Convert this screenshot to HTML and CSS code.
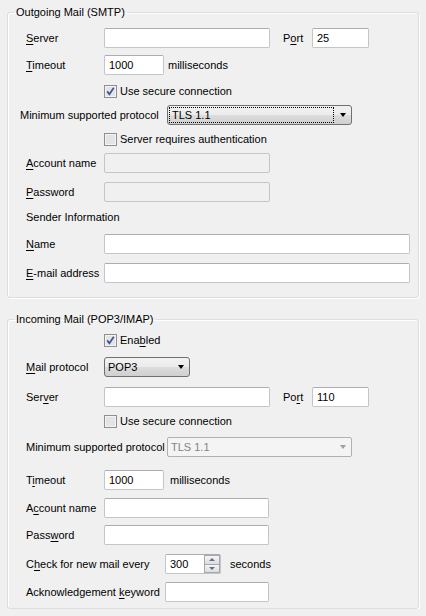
FILE: index.html
```html
<!DOCTYPE html>
<html lang="en">
<head>
    <meta charset="UTF-8">
    <title>Mail Settings</title>
    <link rel="stylesheet" href="styles.css">
</head>
<body>
    <!-- Outgoing mail -->
    <fieldset class="group smtp">
        <legend>Outgoing Mail (SMTP)</legend>

        <div class="row">
            <label class="lbl"><u>S</u>erver</label>
            <input class="text w-server" type="text">
            <label class="port-lbl">P<u>o</u>rt</label>
            <input class="text w-port" type="text" value="25">
        </div>
        <div class="row mt7">
            <label class="lbl"><u>T</u>imeout</label>
            <input class="text w-timeout" type="text" value="1000">
            <span class="unit">milliseconds</span>
        </div>
        <div class="row mt6 check-row">
            <span class="check">
                <svg width="13" height="13" viewBox="0 0 13 13"><rect x="0.5" y="0.5" width="12" height="12" fill="#f4f4f4" stroke="#8f8f8f"/><rect x="2" y="2" width="9" height="9" fill="#e2e4e7"/><path d="M3.2 6.4 L5.4 9.2 L9.8 2.8" fill="none" stroke="#3d5592" stroke-width="1.7"/></svg>
            </span>
            <span>Use secure connection</span>
        </div>
        <div class="row mt4">
            <label class="lbl lbl-proto-out">Minimum supported protocol</label>
            <div class="combo w-proto">
                <span class="combo-text focus">TLS 1.1</span>
                <span class="arrow"></span>
            </div>
        </div>
        <div class="row mt4 check-row">
            <span class="check">
                <svg width="13" height="13" viewBox="0 0 13 13"><rect x="0.5" y="0.5" width="12" height="12" fill="#f4f4f4" stroke="#8f8f8f"/><rect x="2" y="2" width="9" height="9" fill="#e2e4e7"/></svg>
            </span>
            <span>Server requires authentication</span>
        </div>
        <div class="row mt4">
            <label class="lbl"><u>A</u>ccount name</label>
            <input class="text w-server" type="text" disabled>
        </div>
        <div class="row mt9">
            <label class="lbl"><u>P</u>assword</label>
            <input class="text w-server" type="password" disabled>
        </div>
        <div class="row mt5">
            <span>Sender Information</span>
        </div>
        <div class="row mt7">
            <label class="lbl"><u>N</u>ame</label>
            <input class="text w-wide" type="text">
        </div>
        <div class="row mt9">
            <label class="lbl"><u>E</u>-mail address</label>
            <input class="text w-wide" type="text">
        </div>
    </fieldset>

    <!-- Incoming mail -->
    <fieldset class="group pop">
        <legend>Incoming Mail (POP3/IMAP)</legend>

        <div class="row check-row">
            <span class="check">
                <svg width="13" height="13" viewBox="0 0 13 13"><rect x="0.5" y="0.5" width="12" height="12" fill="#f4f4f4" stroke="#8f8f8f"/><rect x="2" y="2" width="9" height="9" fill="#e2e4e7"/><path d="M3.2 6.4 L5.4 9.2 L9.8 2.8" fill="none" stroke="#3d5592" stroke-width="1.7"/></svg>
            </span>
            <span>Ena<u>b</u>led</span>
        </div>
        <div class="row mt7">
            <label class="lbl"><u>M</u>ail protocol</label>
            <div class="combo w-mail">
                <span class="combo-text">POP3</span>
                <span class="arrow"></span>
            </div>
        </div>
        <div class="row mt10">
            <label class="lbl">Ser<u>v</u>er</label>
            <input class="text w-server" type="text">
            <label class="port-lbl">Po<u>r</u>t</label>
            <input class="text w-port" type="text" value="110">
        </div>
        <div class="row mt4 check-row">
            <span class="check">
                <svg width="13" height="13" viewBox="0 0 13 13"><rect x="0.5" y="0.5" width="12" height="12" fill="#f4f4f4" stroke="#8f8f8f"/><rect x="2" y="2" width="9" height="9" fill="#e2e4e7"/></svg>
            </span>
            <span>Use secure connection</span>
        </div>
        <div class="row mt6">
            <label class="lbl lbl-proto-in">Minimum supported protocol</label>
            <div class="combo combo-disabled w-proto">
                <span class="combo-text">TLS 1.1</span>
                <span class="arrow"></span>
            </div>
        </div>
        <div class="row mt13">
            <label class="lbl">T<u>i</u>meout</label>
            <input class="text w-timeout" type="text" value="1000">
            <span class="unit unit-in">milliseconds</span>
        </div>
        <div class="row mt8">
            <label class="lbl">A<u>c</u>count name</label>
            <input class="text w-server-in" type="text">
        </div>
        <div class="row mt7">
            <label class="lbl">Pass<u>w</u>ord</label>
            <input class="text w-server-in" type="password">
        </div>
        <div class="row mt9">
            <label class="lbl lbl-long">C<u>h</u>eck for new mail every</label>
            <div class="spin">
                <span class="spin-val">300</span>
                <div class="spin-btns">
                    <span class="spin-btn"><span class="tri-up"></span></span>
                    <span class="spin-btn"><span class="tri-down"></span></span>
                </div>
            </div>
            <span class="unit unit-sec">seconds</span>
        </div>
        <div class="row mt8">
            <label class="lbl lbl-long">Acknowledgement <u>k</u>eyword</label>
            <input class="text w-ack" type="text">
        </div>
    </fieldset>
</body>
</html>
```

FILE: styles.css
```css
body {
    margin: 0;
    background-color: #f0f0f0;
    font-family: "Liberation Sans", Arial, sans-serif;
    font-size: 11px;
    color: #000;
}
.group {
    box-sizing: border-box;
    width: 412px;
    margin: 5px 0 0 7px;
    border: 1px solid #d5dfe5;
    border-radius: 3px;
    box-shadow: 1px 1px 0 #fff, inset 1px 1px 0 #fff;
    padding: 9px 0 14px 18px;
    min-width: 0;
}
.pop {
    margin-top: 14px;
    padding-top: 4px;
    padding-bottom: 6px;
}
legend {
    margin-left: -12px;
    padding: 0 2px;
    line-height: 14px;
}
.row {
    display: flex;
    align-items: center;
    height: 20px;
    white-space: nowrap;
}
.mt4 { margin-top: 4px; }
.mt5 { margin-top: 5px; }
.mt6 { margin-top: 6px; }
.mt7 { margin-top: 7px; }
.mt8 { margin-top: 8px; }
.mt9 { margin-top: 9px; }
.mt10 { margin-top: 10px; }
.mt13 { margin-top: 13px; }

.lbl {
    width: 78px;
    flex: none;
}
.lbl-proto-out {
    margin-left: -6px;
    width: 147px;
}
.lbl-proto-in {
    width: 141px;
}
.lbl-long {
    width: 139px;
}
u {
    text-underline-offset: 2px;
}
.text {
    box-sizing: border-box;
    height: 20px;
    margin: 0;
    padding: 0 4px;
    border: 1px solid #c3c5c9;
    border-top-color: #abadb3;
    border-radius: 2px;
    background: #fff;
    font-family: inherit;
    font-size: 11px;
    color: #000;
    outline: none;
}
.text:disabled {
    background: #f0f0f0;
    border-color: #c5c5c5;
}
.w-server { width: 166px; }
.w-server-in { width: 165px; }
.w-port { width: 57px; }
.w-timeout { width: 60px; }
.w-wide { width: 306px; }
.w-ack { width: 104px; }
.port-lbl {
    margin-left: 13px;
    width: 29px;
}
.unit {
    margin-left: 4px;
}
.unit-in {
    margin-left: 6px;
}
.unit-sec {
    margin-left: 9px;
}
.check-row {
    padding-left: 78px;
}
.check {
    width: 13px;
    height: 13px;
    margin-right: 3px;
    display: flex;
}

/* drop-down boxes */
.combo {
    box-sizing: border-box;
    height: 20px;
    display: flex;
    align-items: center;
    border: 1px solid #707070;
    border-radius: 3px;
    background: linear-gradient(#f2f2f2 0%, #ebebeb 50%, #dddddd 51%, #cfcfcf 100%);
    position: relative;
}
.w-proto { width: 185px; }
.w-mail { width: 86px; }
.combo-text {
    flex: 1;
    padding-left: 3px;
    line-height: 14px;
}
.combo-text.focus {
    margin-left: 1px;
    padding-left: 2px;
    height: 14px;
    border: 1px dotted #000;
}
.arrow {
    width: 17px;
    display: flex;
    justify-content: center;
}
.arrow::before {
    content: "";
    border-left: 3.5px solid transparent;
    border-right: 3.5px solid transparent;
    border-top: 4px solid #000;
}
.combo-disabled {
    background: #f4f4f4;
    border-color: #adb2b5;
    border-radius: 2px;
    color: #838383;
}
.combo-disabled .arrow::before {
    border-top-color: #a0a0a0;
}

/* numeric spinner */
.spin {
    box-sizing: border-box;
    width: 56px;
    height: 20px;
    display: flex;
    border: 1px solid #c3c5c9;
    border-top-color: #abadb3;
    border-radius: 2px;
    background: #fff;
}
.spin-val {
    flex: 1;
    padding-left: 4px;
    line-height: 18px;
}
.spin-btns {
    width: 16px;
    display: flex;
    flex-direction: column;
}
.spin-btn {
    flex: 1;
    display: flex;
    align-items: center;
    justify-content: center;
    border: 1px solid #a8a8a8;
    background: linear-gradient(#f5f5f5, #dcdcdc);
}
.spin-btn + .spin-btn {
    border-top: none;
}
.tri-up {
    border-left: 3px solid transparent;
    border-right: 3px solid transparent;
    border-bottom: 3px solid #5a6f9c;
}
.tri-down {
    border-left: 3px solid transparent;
    border-right: 3px solid transparent;
    border-top: 3px solid #5a6f9c;
}
```
